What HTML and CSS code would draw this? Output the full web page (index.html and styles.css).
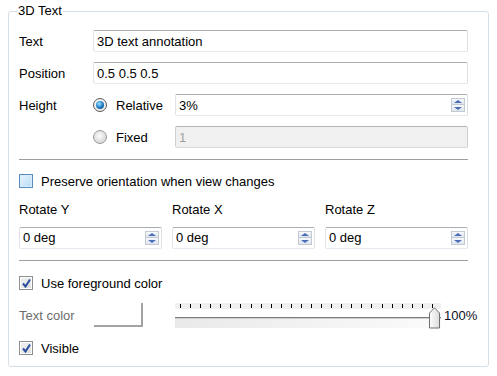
FILE: index.html
```html
<!doctype html>
<html>
<head>
<meta charset="UTF-8"/>
<link rel="stylesheet" href="styles.css">
<title>3D Text</title>
</head>
<body>
<fieldset class="group">
  <legend>3D Text</legend>
  <div class="form">
    <label class="lbl">Text</label>
    <input class="edit wide" type="text" value="3D text annotation"/>
    <label class="lbl">Position</label>
    <input class="edit wide" type="text" value="0.5 0.5 0.5"/>
    <label class="lbl">Height</label>
    <label class="opt"><span class="radio on"></span>Relative</label>
    <div class="edit spin">
      <input type="text" value="3%"/>
      <span class="arrows"><span class="up"></span><span class="down"></span></span>
    </div>
    <span></span>
    <label class="opt"><span class="radio"></span>Fixed</label>
    <input class="edit" type="text" value="1" disabled/>
  </div>
  <hr/>
  <label class="check first"><span class="box hover"></span>Preserve orientation when view changes</label>
  <div class="rotate">
    <span>Rotate Y</span>
    <span>Rotate X</span>
    <span>Rotate Z</span>
    <div class="edit spin">
      <input type="text" value="0 deg"/>
      <span class="arrows"><span class="up"></span><span class="down"></span></span>
    </div>
    <div class="edit spin">
      <input type="text" value="0 deg"/>
      <span class="arrows"><span class="up"></span><span class="down"></span></span>
    </div>
    <div class="edit spin">
      <input type="text" value="0 deg"/>
      <span class="arrows"><span class="up"></span><span class="down"></span></span>
    </div>
  </div>
  <hr/>
  <label class="check second">
    <span class="box">
      <svg width="11" height="11" viewBox="0 0 11 11"><path d="M2 5.5 L4.5 8.5 L9 1.5" fill="none" stroke="#2b4f9e" stroke-width="2"/></svg>
    </span>Use foreground color
  </label>
  <div class="color-row">
    <span class="lbl muted">Text color</span>
    <span class="swatch"></span>
    <div class="slider">
      <div class="ticks">
        <i></i><i></i><i></i><i></i><i></i><i></i><i></i><i></i><i></i><i></i>
        <i></i><i></i><i></i><i></i><i></i><i></i><i></i><i></i><i></i><i></i>
        <i></i><i></i><i></i><i></i><i></i><i></i>
      </div>
      <div class="groove"></div>
      <svg class="thumb" width="12" height="22" viewBox="0 0 12 22">
        <defs>
          <linearGradient id="tg" x1="0" y1="0" x2="1" y2="0">
            <stop offset="0" stop-color="#fdfdfd"/>
            <stop offset="1" stop-color="#dcdcdc"/>
          </linearGradient>
        </defs>
        <polygon points="0.5,21 0.5,6 5.5,0.8 10.5,6 10.5,21" fill="url(#tg)" stroke="#707070"/>
      </svg>
    </div>
    <span class="pct">100%</span>
  </div>
  <label class="check third">
    <span class="box">
      <svg width="11" height="11" viewBox="0 0 11 11"><path d="M2 5.5 L4.5 8.5 L9 1.5" fill="none" stroke="#2b4f9e" stroke-width="2"/></svg>
    </span>Visible
  </label>
</fieldset>
</body>
</html>
```

FILE: styles.css
```css
body {
  margin: 0;
  background: #fff;
  font-family: "Liberation Sans", Arial, sans-serif;
  font-size: 13px;
  color: #000;
}
.group {
  margin: 4px 8px 0;
  padding: 12px 20px 10px 10px;
  border: 1px solid #d5dfe5;
  border-radius: 3px;
  min-width: 0;
}
.group legend {
  font-size: 13px;
  line-height: 14px;
  padding: 0 1px;
  margin-left: -2px;
}
.form {
  display: grid;
  grid-template-columns: 74px 82px minmax(0, 1fr);
  grid-auto-rows: 22px;
  row-gap: 10px;
}
.lbl {
  display: flex;
  align-items: center;
}
.muted {
  color: #6d6d6d;
}
.wide {
  grid-column: 2 / 4;
}
.edit {
  box-sizing: border-box;
  min-width: 0;
  height: 22px;
  margin: 0;
  padding: 0 3px;
  border: 1px solid;
  border-color: #abadb3 #dbdfe6 #e3e9ef #e2e3ea;
  border-radius: 2px;
  font: inherit;
  color: #000;
  background: #fff;
  outline: none;
}
.edit:disabled {
  background: #f0f0f0;
  border-color: #b5b5b5 #cfcfcf #d8d8d8 #cfcfcf;
  color: #a0a0a0;
}
.spin {
  display: flex;
  align-items: center;
  padding-right: 2px;
}
.spin input {
  flex: 1;
  width: 0;
  min-width: 0;
  border: 0;
  padding: 0;
  font: inherit;
  background: transparent;
  outline: none;
}
.arrows {
  display: flex;
  flex-direction: column;
  width: 14px;
}
.arrows span {
  box-sizing: border-box;
  height: 7px;
  border: 1px solid #c2c9d3;
  background: linear-gradient(#f6f8fb, #dfe5ee);
  display: flex;
  align-items: center;
  justify-content: center;
}
.arrows .down {
  border-top: 0;
  height: 7px;
}
.arrows .up::after {
  content: "";
  border: 4px solid transparent;
  border-top: 0;
  border-bottom: 3px solid #4b6cb7;
}
.arrows .down::after {
  content: "";
  border: 4px solid transparent;
  border-bottom: 0;
  border-top: 3px solid #4b6cb7;
}
.opt {
  display: flex;
  align-items: center;
  gap: 9px;
}
.radio {
  box-sizing: border-box;
  width: 14px;
  height: 14px;
  border-radius: 50%;
  border: 1px solid #9a9a9a;
  background: radial-gradient(circle at 45% 40%, #fbfbfb, #d9d9d9 70%, #c6c6c6);
  display: flex;
  align-items: center;
  justify-content: center;
}
.radio.on {
  border-color: #5b5b5b;
  background: radial-gradient(circle at 45% 40%, #ffffff, #e6e6e6 80%);
}
.radio.on::after {
  content: "";
  width: 8px;
  height: 8px;
  border-radius: 50%;
  background: radial-gradient(circle at 40% 35%, #a8e0ff, #2a8ad0 45%, #0c3f78 90%);
}
hr {
  border: 0;
  height: 1px;
  background: #a0a0a0;
  margin: 11px 0 0;
}
.check {
  display: flex;
  align-items: center;
  gap: 8px;
  height: 16px;
}
.first {
  margin-top: 13px;
}
.second {
  margin-top: 14px;
}
.third {
  margin-top: 13px;
}
.box {
  box-sizing: border-box;
  width: 14px;
  height: 14px;
  border: 1px solid #8e8f8f;
  background: linear-gradient(135deg, #f2f2f2, #dcdcdc);
  box-shadow: inset 0 0 0 1px #fff;
  display: flex;
  align-items: center;
  justify-content: center;
}
.box.hover {
  border-color: #5a8cbc;
  background: linear-gradient(135deg, #e8f4fd, #b8dcf6);
  box-shadow: inset 0 0 0 1px #d8ecfb;
}
.rotate {
  display: grid;
  grid-template-columns: repeat(3, minmax(0, 1fr));
  grid-template-rows: 14px 22px;
  column-gap: 10px;
  row-gap: 10px;
  margin-top: 14px;
  line-height: 14px;
}
.color-row {
  display: flex;
  align-items: center;
  height: 24px;
  margin-top: 12px;
}
.color-row .lbl {
  width: 75px;
  flex-shrink: 0;
}
.swatch {
  box-sizing: border-box;
  width: 49px;
  height: 24px;
  flex-shrink: 0;
  border-right: 2px solid #a3a3a3;
  border-bottom: 2px solid #a3a3a3;
  background: #fff;
}
.slider {
  position: relative;
  flex-shrink: 0;
  width: 266px;
  height: 25px;
  margin-left: 32px;
}
.ticks {
  box-sizing: border-box;
  height: 6px;
  padding: 1px 8px 0 5px;
  background: #f0f0f0;
  display: flex;
  justify-content: space-between;
}
.ticks i {
  width: 1px;
  height: 4px;
  background: #000;
}
.groove {
  margin-top: 8px;
  height: 10px;
  border-top: 1px solid #7c7c7c;
  box-shadow: inset 0 1px #cfcfcf;
  background: linear-gradient(90deg, #e9e9e9, #f4f4f4 60%, #fbfbfb);
}
.thumb {
  position: absolute;
  right: 0;
  top: 4px;
}
.pct {
  flex-shrink: 0;
  margin-left: 3px;
  color: #101020;
}
```
